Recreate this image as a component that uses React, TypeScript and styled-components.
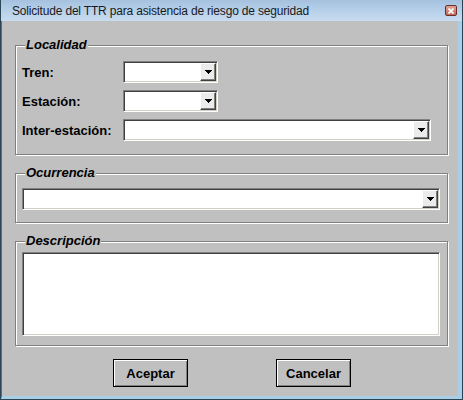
import React from "react";
import styled, { createGlobalStyle } from "styled-components";

const GlobalStyle = createGlobalStyle`
  html, body { margin: 0; padding: 0; background: #c0c0c0; }
  body { font-family: "Liberation Sans", Arial, sans-serif; }
  * { box-sizing: border-box; }
`;

const Window = styled.div`
  width: 463px;
  height: 400px;
  display: flex;
  flex-direction: column;
  border-left: 1px solid #2d4656;
  border-right: 1px solid #2b4353;
  border-bottom: 1px solid #2b4353;
  background: #a9cfe6;
`;

const TitleBar = styled.div`
  height: 21px;
  flex: none;
  display: flex;
  align-items: center;
  justify-content: space-between;
  padding: 1px 5px 0 11px;
  background: linear-gradient(to bottom, #a4c1de 0%, #b7d0ea 50%, #c8dcf0 100%);
  font-size: 12px;
  letter-spacing: -0.18px;
  color: #1a1a1a;
`;

const CloseButton = styled.div`
  width: 12px;
  height: 11px;
  margin-top: -1px;
  display: flex;
  align-items: center;
  justify-content: center;
  border: 1px solid #6a2e28;
  border-radius: 2px;
  background: linear-gradient(to bottom, #e0a091, #c06b5b);
`;

const Frame = styled.div`
  flex: 1;
  display: flex;
  flex-direction: column;
  gap: 11px;
  background: #c0c0c0;
  border-left: 1px solid #55717f;
  border-right: 4px solid #a9cfe6;
  border-bottom: 3px solid #a9cfe6;
  padding: 17px 10px 0 13px;
`;

const GroupBox = styled.fieldset<{ $pad: string }>`
  margin: 0;
  min-width: 0;
  border: 1px solid #808080;
  box-shadow: 1px 1px 0 #ffffff, inset 1px 1px 0 #ffffff;
  padding: ${(p) => p.$pad};
`;

const Legend = styled.legend`
  font-size: 13px;
  font-weight: bold;
  font-style: italic;
  line-height: 14px;
  color: #000;
  padding: 0 1px;
  margin-left: 3px;
  background: #c0c0c0;
`;

const FormGrid = styled.div`
  display: grid;
  grid-template-columns: 101px 1fr;
  row-gap: 7px;
  align-items: center;
  justify-items: start;
`;

const FieldLabel = styled.span`
  font-size: 13px;
  font-weight: bold;
  color: #000;
`;

const Combo = styled.div<{ $w: number }>`
  width: ${(p) => p.$w}px;
  height: 22px;
  background: #fff;
  border-style: solid;
  border-width: 1px;
  border-color: #808080 #ffffff #ffffff #808080;
  box-shadow: inset 1px 1px 0 #404040, inset -1px -1px 0 #d4d0c8;
  padding: 1px;
  display: flex;
  justify-content: flex-end;
`;

const ArrowButton = styled.div`
  width: 16px;
  height: 18px;
  background: #ebebeb;
  border-style: solid;
  border-width: 1px;
  border-color: #ffffff #404040 #404040 #ffffff;
  box-shadow: inset -1px -1px 0 #808080;
  display: flex;
  align-items: center;
  justify-content: center;
`;

const TextArea = styled.textarea`
  display: block;
  width: 418px;
  height: 84px;
  margin: 0;
  padding: 2px;
  resize: none;
  outline: none;
  background: #fff;
  border-style: solid;
  border-width: 1px;
  border-color: #808080 #ffffff #ffffff #808080;
  box-shadow: inset 1px 1px 0 #404040, inset -1px -1px 0 #d4d0c8;
  font-family: "Liberation Sans", Arial, sans-serif;
  font-size: 13px;
`;

const ButtonRow = styled.div`
  display: flex;
  justify-content: center;
  gap: 88px;
  padding-left: 1px;
  margin-top: 2px;
`;

const PushButton = styled.button`
  width: 75px;
  height: 28px;
  padding: 0;
  background: #c0c0c0;
  border: 1px solid #000;
  box-shadow: inset 1px 1px 0 #ffffff, inset -1px -1px 0 #808080;
  font-family: "Liberation Sans", Arial, sans-serif;
  font-size: 13px;
  font-weight: bold;
  color: #000;
`;

const Arrow = () => (
  <svg width="7" height="4" viewBox="0 0 7 4" shapeRendering="crispEdges">
    <rect x="0" y="0" width="7" height="1" fill="#000" />
    <rect x="1" y="1" width="5" height="1" fill="#000" />
    <rect x="2" y="2" width="3" height="1" fill="#000" />
    <rect x="3" y="3" width="1" height="1" fill="#000" />
  </svg>
);

const ComboBox = ({ w }: { w: number }) => (
  <Combo $w={w}>
    <ArrowButton>
      <Arrow />
    </ArrowButton>
  </Combo>
);

export default function App() {
  return (
    <>
      <GlobalStyle />
      <Window>
        <TitleBar>
          <span>Solicitude del TTR para asistencia de riesgo de seguridad</span>
          <CloseButton>
            <svg width="6" height="6" viewBox="0 0 6 6">
              <path d="M0.5 0.5 L5.5 5.5 M5.5 0.5 L0.5 5.5" stroke="#fff" strokeWidth="1.8" />
            </svg>
          </CloseButton>
        </TitleBar>
        <Frame>
          <GroupBox $pad="9px 16px 13px 6px">
            <Legend>Localidad</Legend>
            <FormGrid>
              <FieldLabel>Tren:</FieldLabel>
              <ComboBox w={95} />
              <FieldLabel>Estación:</FieldLabel>
              <ComboBox w={95} />
              <FieldLabel>Inter-estación:</FieldLabel>
              <ComboBox w={308} />
            </FormGrid>
          </GroupBox>
          <GroupBox $pad="8px 7px 12px 6px">
            <Legend>Ocurrencia</Legend>
            <ComboBox w={418} />
          </GroupBox>
          <GroupBox $pad="4px 7px 9px 6px">
            <Legend>Descripción</Legend>
            <TextArea />
          </GroupBox>
          <ButtonRow>
            <PushButton>Aceptar</PushButton>
            <PushButton>Cancelar</PushButton>
          </ButtonRow>
        </Frame>
      </Window>
    </>
  );
}
